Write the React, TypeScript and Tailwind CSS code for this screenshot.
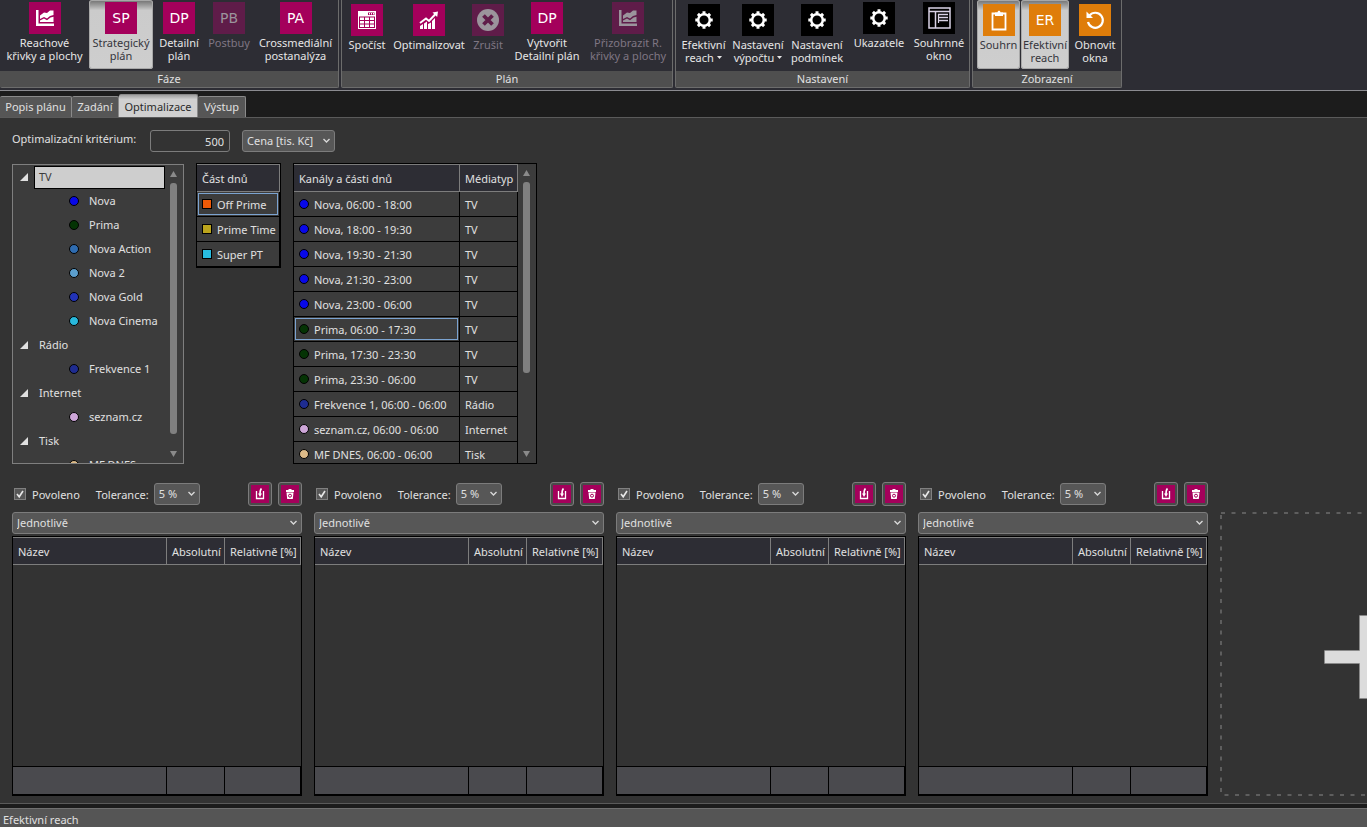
import type { ReactNode } from "react";

/* ---------- icons ---------- */

const svgProps = { viewBox: "0 0 32 32", className: "size-8", "aria-hidden": true } as const;

function ChartIcon() {
  return (
    <svg {...svgProps} fill="currentColor">
      <path d="M7 8h2.500v13.500H25V24H7z" />
      <path d="M11 17v-3.500l4-3 3 .5 3-2.500h3.500v4.500l-3.500 1-3 2.500-3-1.500z" />
      <path d="M11 20v-1.500l4-2 3 1.700 3.500-2.700 3-.8V20z" />
    </svg>
  );
}

function CalculatorIcon() {
  return (
    <svg {...svgProps} fill="currentColor">
      <path fillRule="evenodd" d="M7 7h18v18H7zM8 12.500v11.500h16v-11.500zM17 8.500v2.500h6.500v-2.500z" />
      <path d="M18 9h1v1.500h-1zM20 9h1v1.500h-1zM22 9h1v1.500h-1z" />
      <path d="M9 13.500h4v2.500H9zM14 13.500h4v2.500h-4zM19 13.500h4v2.500h-4zM9 17h4v2.500H9zM14 17h4v2.500h-4zM19 17h4v2.500h-4zM9 20.500h4V23H9zM14 20.500h4V23h-4zM19 20.500h4V23h-4z" />
    </svg>
  );
}

function GrowthIcon() {
  return (
    <svg {...svgProps} fill="currentColor">
      <path d="M7 22l3-2v5H7zM11 19.500l3-2V25h-3zM15 20l3-1.500V25h-3zM19 17l3-3v11h-3z" />
      <path d="M7 19l6-4.500 3 2.500 7-7.500" fill="none" stroke="currentColor" strokeWidth="2" />
      <path d="M19.500 8.500L25 7.500l-.8 5.500z" />
    </svg>
  );
}

function CancelIcon() {
  return (
    <svg {...svgProps}>
      <circle cx="16" cy="16" r="11" fill="#9b949c" />
      <path d="M11.500 11.500l9 9M20.500 11.500l-9 9" stroke="#5f1c49" strokeWidth="3.800" />
    </svg>
  );
}

function GearIcon() {
  return (
    <svg {...svgProps} fill="none" stroke="currentColor">
      <circle cx="16" cy="16" r="5.800" strokeWidth="2.500" />
      <g strokeWidth="3">
        <path d="M16 10V7.300M16 22v2.700M10 16H7.300M22 16h2.700" />
        <path d="M11.800 11.800L9.900 9.900M20.200 20.200l1.900 1.900M11.800 20.200l-1.900 1.900M20.200 11.800l1.900-1.900" />
      </g>
    </svg>
  );
}

function WindowIcon() {
  return (
    <svg {...svgProps} fill="none" stroke="#d9d2e6">
      <path d="M6 6h21v20H6zM6 9.500h21" strokeWidth="1.500" />
      <path d="M12.500 10v16" strokeWidth="1.500" />
      <path d="M15 12.500h10M15 15.500h10M15 18.500h10" strokeWidth="1.300" />
      <path d="M15.500 12v9" strokeWidth="1.200" />
    </svg>
  );
}

function ClipboardIcon() {
  return (
    <svg {...svgProps} fill="none" stroke="currentColor">
      <path d="M9.500 9.500h13v16h-13z" strokeWidth="1.800" />
      <path d="M12 8.500h2.500C14.500 6 17.500 6 17.500 8.500H20V12h-8z" fill="currentColor" stroke="none" />
    </svg>
  );
}

function ResetIcon() {
  return (
    <svg {...svgProps} fill="none" stroke="currentColor" strokeWidth="2.200">
      <path d="M10.500 11.500a7.500 7.500 0 1 1-1.500 6.500" />
      <path d="M7.500 7.500v6.500h6.500z" fill="currentColor" stroke="none" />
    </svg>
  );
}

function ImportIcon() {
  return (
    <svg viewBox="0 0 18 18" className="size-[18px]" aria-hidden fill="none" stroke="#fff">
      <path d="M5.500 6v7.500h7V6" strokeWidth="1.300" />
      <path d="M10.500 3.500C9.200 4.500 9 6 9 9" strokeWidth="1.600" />
      <path d="M7 8.500h4L9 12z" fill="#fff" stroke="none" />
    </svg>
  );
}

function TrashIcon() {
  return (
    <svg viewBox="0 0 18 18" className="size-[18px]" aria-hidden>
      <path d="M7.500 4h3v1H13v2H5V5h2.500z" fill="#fff" />
      <path d="M5.500 7.500h7l-.7 6.500H6.200z" fill="#fff" />
      <circle cx="9" cy="10.700" r="1.500" fill="none" stroke="#a8005c" />
    </svg>
  );
}

function Chevron() {
  return (
    <svg viewBox="0 0 9 6" className="pointer-events-none absolute right-1 top-1/2 h-[6px] w-[9px] -translate-y-1/2" aria-hidden>
      <path d="M1.500 1l3 3 3-3" fill="none" stroke="#d8d8d8" strokeWidth="1.400" />
    </svg>
  );
}

/* ---------- ribbon ---------- */

const tileTone = {
  pink: "bg-[#a4005b] text-white",
  dim: "bg-[#5f1c49] text-[#9b949c]",
  black: "bg-black text-white",
  orange: "bg-[#df7d0a] text-white",
};

type RibbonItem = {
  icon: ReactNode;
  tone: keyof typeof tileTone;
  lines: string[];
  width: string;
  low?: boolean;
  active?: boolean;
  menu?: boolean;
};

function RibbonButton({ icon, tone, lines, width, low, active, menu }: RibbonItem) {
  return (
    <button
      type="button"
      disabled={tone === "dim"}
      className={`flex h-[69px] shrink-0 flex-col items-center rounded-[3px] ${width} ${low ? "pt-1" : "pt-[2px]"} ${
        active
          ? "bg-linear-to-b from-[#707070] via-[#cbcbcb] via-15% to-[#cecece] text-[#35353c] shadow-[inset_0_0_0_1px_#a8a8a8]"
          : tone === "dim"
            ? "text-[#7f7683]"
            : "text-[#e6e6e6]"
      }`}
    >
      <span className={`flex size-8 shrink-0 items-center justify-center font-['DejaVu_Sans',sans-serif] text-[14px] ${tileTone[tone]}`}>
        {icon}
      </span>
      <span className="mt-[2px] whitespace-nowrap leading-[13px]">
        {lines.map((line, i) => (
          <span key={line} className="block">
            {line}
            {menu && i === lines.length - 1 && (
              <svg viewBox="0 0 5 3" className="mb-[4px] ml-[3px] inline h-[3px] w-[5px]" aria-hidden>
                <path d="M0 0h5L2.500 3z" fill="#e6e6e6" />
              </svg>
            )}
          </span>
        ))}
      </span>
    </button>
  );
}

const ribbon: { title: string; pad: string; items: RibbonItem[] }[] = [
  {
    title: "Fáze",
    pad: "gap-0",
    items: [
      { icon: <ChartIcon />, tone: "pink", lines: ["Reachové", "křivky a plochy"], width: "w-[89px]" },
      { icon: "SP", tone: "pink", lines: ["Strategický", "plán"], width: "w-[64px]", active: true },
      { icon: "DP", tone: "pink", lines: ["Detailní", "plán"], width: "w-[52px]" },
      { icon: "PB", tone: "dim", lines: ["Postbuy"], width: "w-[48px]" },
      { icon: "PA", tone: "pink", lines: ["Crossmediální", "postanalýza"], width: "w-[85px]" },
    ],
  },
  {
    title: "Plán",
    pad: "gap-0",
    items: [
      { icon: <CalculatorIcon />, tone: "pink", lines: ["Spočíst"], width: "w-[50px]", low: true },
      { icon: <GrowthIcon />, tone: "pink", lines: ["Optimalizovat"], width: "w-[74px]", low: true },
      { icon: <CancelIcon />, tone: "dim", lines: ["Zrušit"], width: "w-[44px]", low: true },
      { icon: "DP", tone: "pink", lines: ["Vytvořit", "Detailní plán"], width: "w-[74px]" },
      { icon: <ChartIcon />, tone: "dim", lines: ["Přizobrazit R.", "křivky a plochy"], width: "w-[88px]" },
    ],
  },
  {
    title: "Nastavení",
    pad: "gap-0",
    items: [
      { icon: <GearIcon />, tone: "black", lines: ["Efektivní", "reach"], width: "w-[55px]", low: true, menu: true },
      { icon: <GearIcon />, tone: "black", lines: ["Nastavení", "výpočtu"], width: "w-[54px]", low: true, menu: true },
      { icon: <GearIcon />, tone: "black", lines: ["Nastavení", "podmínek"], width: "w-[64px]", low: true },
      { icon: <GearIcon />, tone: "black", lines: ["Ukazatele"], width: "w-[60px]" },
      { icon: <WindowIcon />, tone: "black", lines: ["Souhrnné", "okno"], width: "w-[60px]" },
    ],
  },
  {
    title: "Zobrazení",
    pad: "gap-px pl-1 pr-px",
    items: [
      { icon: <ClipboardIcon />, tone: "orange", lines: ["Souhrn"], width: "w-[43px]", low: true, active: true },
      { icon: "ER", tone: "orange", lines: ["Efektivní", "reach"], width: "w-[48px]", low: true, active: true },
      { icon: <ResetIcon />, tone: "orange", lines: ["Obnovit", "okna"], width: "w-[50px]", low: true },
    ],
  },
];

function Ribbon() {
  return (
    <header className="flex shrink-0 gap-[2px] border-b border-[#8b8b90] bg-[#2d2d34] pb-[2px]">
      {ribbon.map((group, g) => (
        <section
          key={group.title}
          aria-label={group.title}
          className={`rounded-b-[2px] border-r border-b border-[#6c6c6c] ${g === 0 ? "" : "border-l"}`}
        >
          <div className={`flex h-[71px] ${group.pad}`}>
            {group.items.map((item, i) => (
              <RibbonButton key={i} {...item} />
            ))}
          </div>
          <h2 className="bg-[#4f4f4f] text-center leading-[16px]">{group.title}</h2>
        </section>
      ))}
    </header>
  );
}

/* ---------- tabs ---------- */

const tabs = [
  { label: "Popis plánu", width: "w-[72px]" },
  { label: "Zadání", width: "w-[47px]" },
  { label: "Optimalizace", width: "w-[79px]" },
  { label: "Výstup", width: "w-[48px]" },
];

function Tabs() {
  return (
    <div role="tablist" className="flex h-[27px] shrink-0 items-end border-b border-[#5a5a5a] bg-[#1c1c1c]">
      {tabs.map(({ label, width }) => {
        const active = label === "Optimalizace";
        return (
          <button
            key={label}
            type="button"
            role="tab"
            aria-selected={active}
            className={`shrink-0 whitespace-nowrap rounded-t-[2px] border-t border-r border-[#8a8a8a] ${width} ${
              active
                ? "h-[23px] bg-linear-to-b from-[#a0a0a0] via-[#d0d0d0] via-20% to-[#d0d0d0] pt-[2px] text-[#2a2a2a]"
                : "h-[21px] bg-[#565656]"
            }`}
          >
            {label}
          </button>
        );
      })}
    </div>
  );
}

/* ---------- shared controls ---------- */

function Select({ label, value, className }: { label: string; value: string; className: string }) {
  return (
    <span className={`relative ${className}`}>
      <select
        aria-label={label}
        defaultValue={value}
        className="size-full appearance-none rounded-[3px] border border-[#7c7c7c] bg-[#575757] pl-1 outline-none"
      >
        <option>{value}</option>
      </select>
      <Chevron />
    </span>
  );
}

function Scrollbar({ thumb }: { thumb: string }) {
  return (
    <div className="flex w-[18px] shrink-0 flex-col items-center py-[6px] pr-[2px]" aria-hidden>
      <svg viewBox="0 0 7 6" className="h-[6px] w-[7px]">
        <path d="M0 6h7L3.500 0z" fill="#8a8a8a" />
      </svg>
      <div className={`mt-[6px] w-[7px] rounded-[3px] bg-[#808080] ${thumb}`} />
      <svg viewBox="0 0 7 6" className="mt-auto h-[6px] w-[7px]">
        <path d="M0 0h7L3.500 6z" fill="#8a8a8a" />
      </svg>
    </div>
  );
}

const dotColor = {
  nova: "bg-[#0808e8]",
  prima: "bg-[#043304]",
  action: "bg-[#2f6cb0]",
  nova2: "bg-[#5c9fce]",
  gold: "bg-[#2233b8]",
  cinema: "bg-[#28b8dc]",
  radio: "bg-[#1e2c90]",
  seznam: "bg-[#cda6d8]",
  dnes: "bg-[#debb88]",
};
type DotName = keyof typeof dotColor;

function Dot({ name }: { name: DotName }) {
  return <span className={`inline-block size-[10px] shrink-0 rounded-full border border-black ${dotColor[name]}`} />;
}

/* ---------- top panels ---------- */

const tree: { name: string; children: [DotName, string][] }[] = [
  {
    name: "TV",
    children: [
      ["nova", "Nova"],
      ["prima", "Prima"],
      ["action", "Nova Action"],
      ["nova2", "Nova 2"],
      ["gold", "Nova Gold"],
      ["cinema", "Nova Cinema"],
    ],
  },
  { name: "Rádio", children: [["radio", "Frekvence 1"]] },
  { name: "Internet", children: [["seznam", "seznam.cz"]] },
  { name: "Tisk", children: [["dnes", "MF DNES"]] },
];

function MediaTree() {
  return (
    <div className="mt-px flex h-[300px] w-[172px] shrink-0 border border-[#7f7f7f] bg-[#3c3c3c]">
      <ul role="tree" className="flex-1 overflow-hidden">
        {tree.map((node, n) => (
          <li key={node.name} role="treeitem" aria-expanded="true" aria-selected={n === 0}>
            <div className="flex h-6 items-center">
              <svg viewBox="0 0 8 8" className="ml-[7px] mr-[6px] size-[8px] shrink-0" aria-hidden>
                <path d="M8 0v8H0z" fill="#e0e0e0" />
              </svg>
              <span
                className={`flex h-[23px] flex-1 items-center border pl-1 ${
                  n === 0 ? "border-black bg-[#cecece] text-[#3a3a3a]" : "border-transparent"
                }`}
              >
                {node.name}
              </span>
            </div>
            <ul role="group">
              {node.children.map(([dot, label]) => (
                <li key={label} role="treeitem" className="flex h-6 items-center gap-[10px] pl-[56px]">
                  <Dot name={dot} />
                  {label}
                </li>
              ))}
            </ul>
          </li>
        ))}
      </ul>
      <Scrollbar thumb="h-[251px]" />
    </div>
  );
}

const th =
  "h-[28px] whitespace-nowrap border-t border-b border-r border-[#7d7d7d] bg-[#2d2d34] px-[5px] pt-px text-left font-normal";
const focusRing = "shadow-[inset_0_0_0_1px_#3c3c3c,inset_0_0_0_2px_#7ba3d0]";

const dayParts = [
  { label: "Off Prime", color: "bg-[#ee5a08]" },
  { label: "Prime Time", color: "bg-[#bba41c]" },
  { label: "Super PT", color: "bg-[#28bce0]" },
];

function DayParts() {
  return (
    <div className="w-[85px] shrink-0 self-start border border-black">
      <table className="w-full border-separate border-spacing-0 bg-[#3c3c3c]">
        <thead>
          <tr>
            <th className={th}>Část dnů</th>
          </tr>
        </thead>
        <tbody>
          {dayParts.map(({ label, color }, i) => (
            <tr key={label}>
              <td
                className={`h-[25px] whitespace-nowrap border-r border-b border-black pl-[5px] ${i === 0 ? focusRing : ""}`}
              >
                <span className="flex items-center gap-[5px]">
                  <span className={`size-[10px] shrink-0 border border-black ${color}`} />
                  <span className="pt-px">{label}</span>
                </span>
              </td>
            </tr>
          ))}
        </tbody>
      </table>
    </div>
  );
}

const channels: [DotName, string, string][] = [
  ["nova", "Nova, 06:00 - 18:00", "TV"],
  ["nova", "Nova, 18:00 - 19:30", "TV"],
  ["nova", "Nova, 19:30 - 21:30", "TV"],
  ["nova", "Nova, 21:30 - 23:00", "TV"],
  ["nova", "Nova, 23:00 - 06:00", "TV"],
  ["prima", "Prima, 06:00 - 17:30", "TV"],
  ["prima", "Prima, 17:30 - 23:30", "TV"],
  ["prima", "Prima, 23:30 - 06:00", "TV"],
  ["radio", "Frekvence 1, 06:00 - 06:00", "Rádio"],
  ["seznam", "seznam.cz, 06:00 - 06:00", "Internet"],
  ["dnes", "MF DNES, 06:00 - 06:00", "Tisk"],
];

function Channels() {
  return (
    <div className="flex h-[301px] w-[244px] shrink-0 border border-black bg-[#3c3c3c]">
      <div className="flex-1 overflow-hidden">
        <table className="w-full table-fixed border-separate border-spacing-0">
          <thead>
            <tr>
              <th className={`${th} w-[166px]`}>Kanály a části dnů</th>
              <th className={th}>Médiatyp</th>
            </tr>
          </thead>
          <tbody>
            {channels.map(([dot, label, type]) => (
              <tr key={label}>
                <td
                  className={`h-[25px] whitespace-nowrap border-r border-b border-black pl-[5px] ${
                    label === "Prima, 06:00 - 17:30" ? focusRing : ""
                  }`}
                >
                  <span className="flex items-center gap-[5px]">
                    <Dot name={dot} />
                    <span className="pt-px">{label}</span>
                  </span>
                </td>
                <td className="border-r border-b border-black pl-[5px] pt-px">{type}</td>
              </tr>
            ))}
          </tbody>
        </table>
      </div>
      <Scrollbar thumb="h-[191px]" />
    </div>
  );
}

/* ---------- criteria panels ---------- */

function IconButton({ label, children }: { label: string; children: ReactNode }) {
  return (
    <button
      type="button"
      aria-label={label}
      className="flex size-6 items-center justify-center rounded-[3px] border border-[#7c7c7c] bg-[#4a4a4a]"
    >
      <span className="bg-[#a4005b]">{children}</span>
    </button>
  );
}

function CriteriaPanel() {
  return (
    <section className="flex w-[290px] shrink-0 flex-col">
      <div className="flex h-6 items-center">
        <label className="flex items-center gap-[6px] pl-[2px]">
          <span className="relative flex size-3">
            <input
              type="checkbox"
              defaultChecked
              className="peer size-3 appearance-none border border-[#808080] bg-[#575757]"
            />
            <svg
              viewBox="0 0 12 12"
              className="pointer-events-none absolute inset-0 hidden size-3 peer-checked:block"
              aria-hidden
            >
              <path d="M3 6l2.200 2.800L9 3" fill="none" stroke="#e8e8e8" strokeWidth="1.600" />
            </svg>
          </span>
          <span className="pt-px">Povoleno</span>
        </label>
        <span className="ml-4 w-[58px] whitespace-nowrap pt-px">Tolerance:</span>
        <Select label="Tolerance" value="5 %" className="h-[22px] w-[46px]" />
        <div className="ml-auto flex gap-[6px]">
          <IconButton label="Načíst">
            <ImportIcon />
          </IconButton>
          <IconButton label="Smazat">
            <TrashIcon />
          </IconButton>
        </div>
      </div>
      <Select label="Režim" value="Jednotlivě" className="mt-[6px] h-[22px] w-full shrink-0" />
      <div className="mt-[2px] flex flex-1 border border-black">
        <table className="w-full table-fixed border-separate border-spacing-0">
          <thead>
            <tr>
              <th className={`${th} w-[154px]`}>Název</th>
              <th className={`${th} w-[58px]`}>Absolutní</th>
              <th className={th}>Relativně [%]</th>
            </tr>
          </thead>
          <tbody>
            <tr>
              <td colSpan={3} />
            </tr>
          </tbody>
          <tfoot>
            <tr>
              <td className="h-[29px] border-t border-r border-b border-black bg-[#4a4a4e]" />
              <td className="border-t border-r border-b border-black bg-[#4a4a4e]" />
              <td className="border-t border-r border-b border-black bg-[#4a4a4e]" />
            </tr>
          </tfoot>
        </table>
      </div>
    </section>
  );
}

function AddPanel() {
  return (
    <button type="button" aria-label="Přidat" className="relative mt-[30px] w-[290px] shrink-0 pt-[6px] pl-[2px]">
      <svg className="absolute inset-0 size-full" aria-hidden>
        <rect
          x="1"
          y="1"
          width="288"
          height="99.300%"
          fill="none"
          stroke="#5e5e5e"
          strokeWidth="2"
          strokeDasharray="4 6.500"
        />
      </svg>
      <svg viewBox="0 0 84 84" className="mx-auto size-[84px]" aria-hidden>
        <path d="M35.500 .5h13v35h35v13h-35v35h-13v-35H.5v-13h35z" fill="#dcdcdc" stroke="#8a8a8a" strokeWidth=".5" />
      </svg>
    </button>
  );
}

export default function App() {
  return (
    <div className="flex h-screen min-h-[700px] flex-col overflow-hidden bg-[#333333] font-['Noto_Sans','Open_Sans',sans-serif] text-[11px] leading-[16px] text-[#e0e0e0]">
      <Ribbon />
      <Tabs />
      <main className="flex flex-1 flex-col overflow-hidden border-b border-[#5a5a5a] pt-3 pb-[7px] pl-3">
        <div className="flex shrink-0 items-center">
          <label htmlFor="criterion" className="w-[138px] whitespace-nowrap pb-1">
            Optimalizační kritérium:
          </label>
          <input
            id="criterion"
            defaultValue="500"
            className="h-[22px] w-[80px] rounded-[3px] border border-[#7c7c7c] bg-[#333333] pr-[5px] text-right outline-none"
          />
          <Select label="Jednotka" value="Cena [tis. Kč]" className="ml-3 h-[22px] w-[93px]" />
        </div>
        <div className="mt-[11px] flex shrink-0 gap-3">
          <MediaTree />
          <DayParts />
          <Channels />
        </div>
        <div className="mt-[18px] flex flex-1 gap-3">
          <CriteriaPanel />
          <CriteriaPanel />
          <CriteriaPanel />
          <CriteriaPanel />
          <AddPanel />
        </div>
      </main>
      <footer className="mt-1 flex h-[19px] shrink-0 items-center border-t border-[#707070] bg-[#555555] pl-[3px] pt-[3px] shadow-[0_-4px_0_#1c1c1c]">
        Efektivní reach
      </footer>
    </div>
  );
}
